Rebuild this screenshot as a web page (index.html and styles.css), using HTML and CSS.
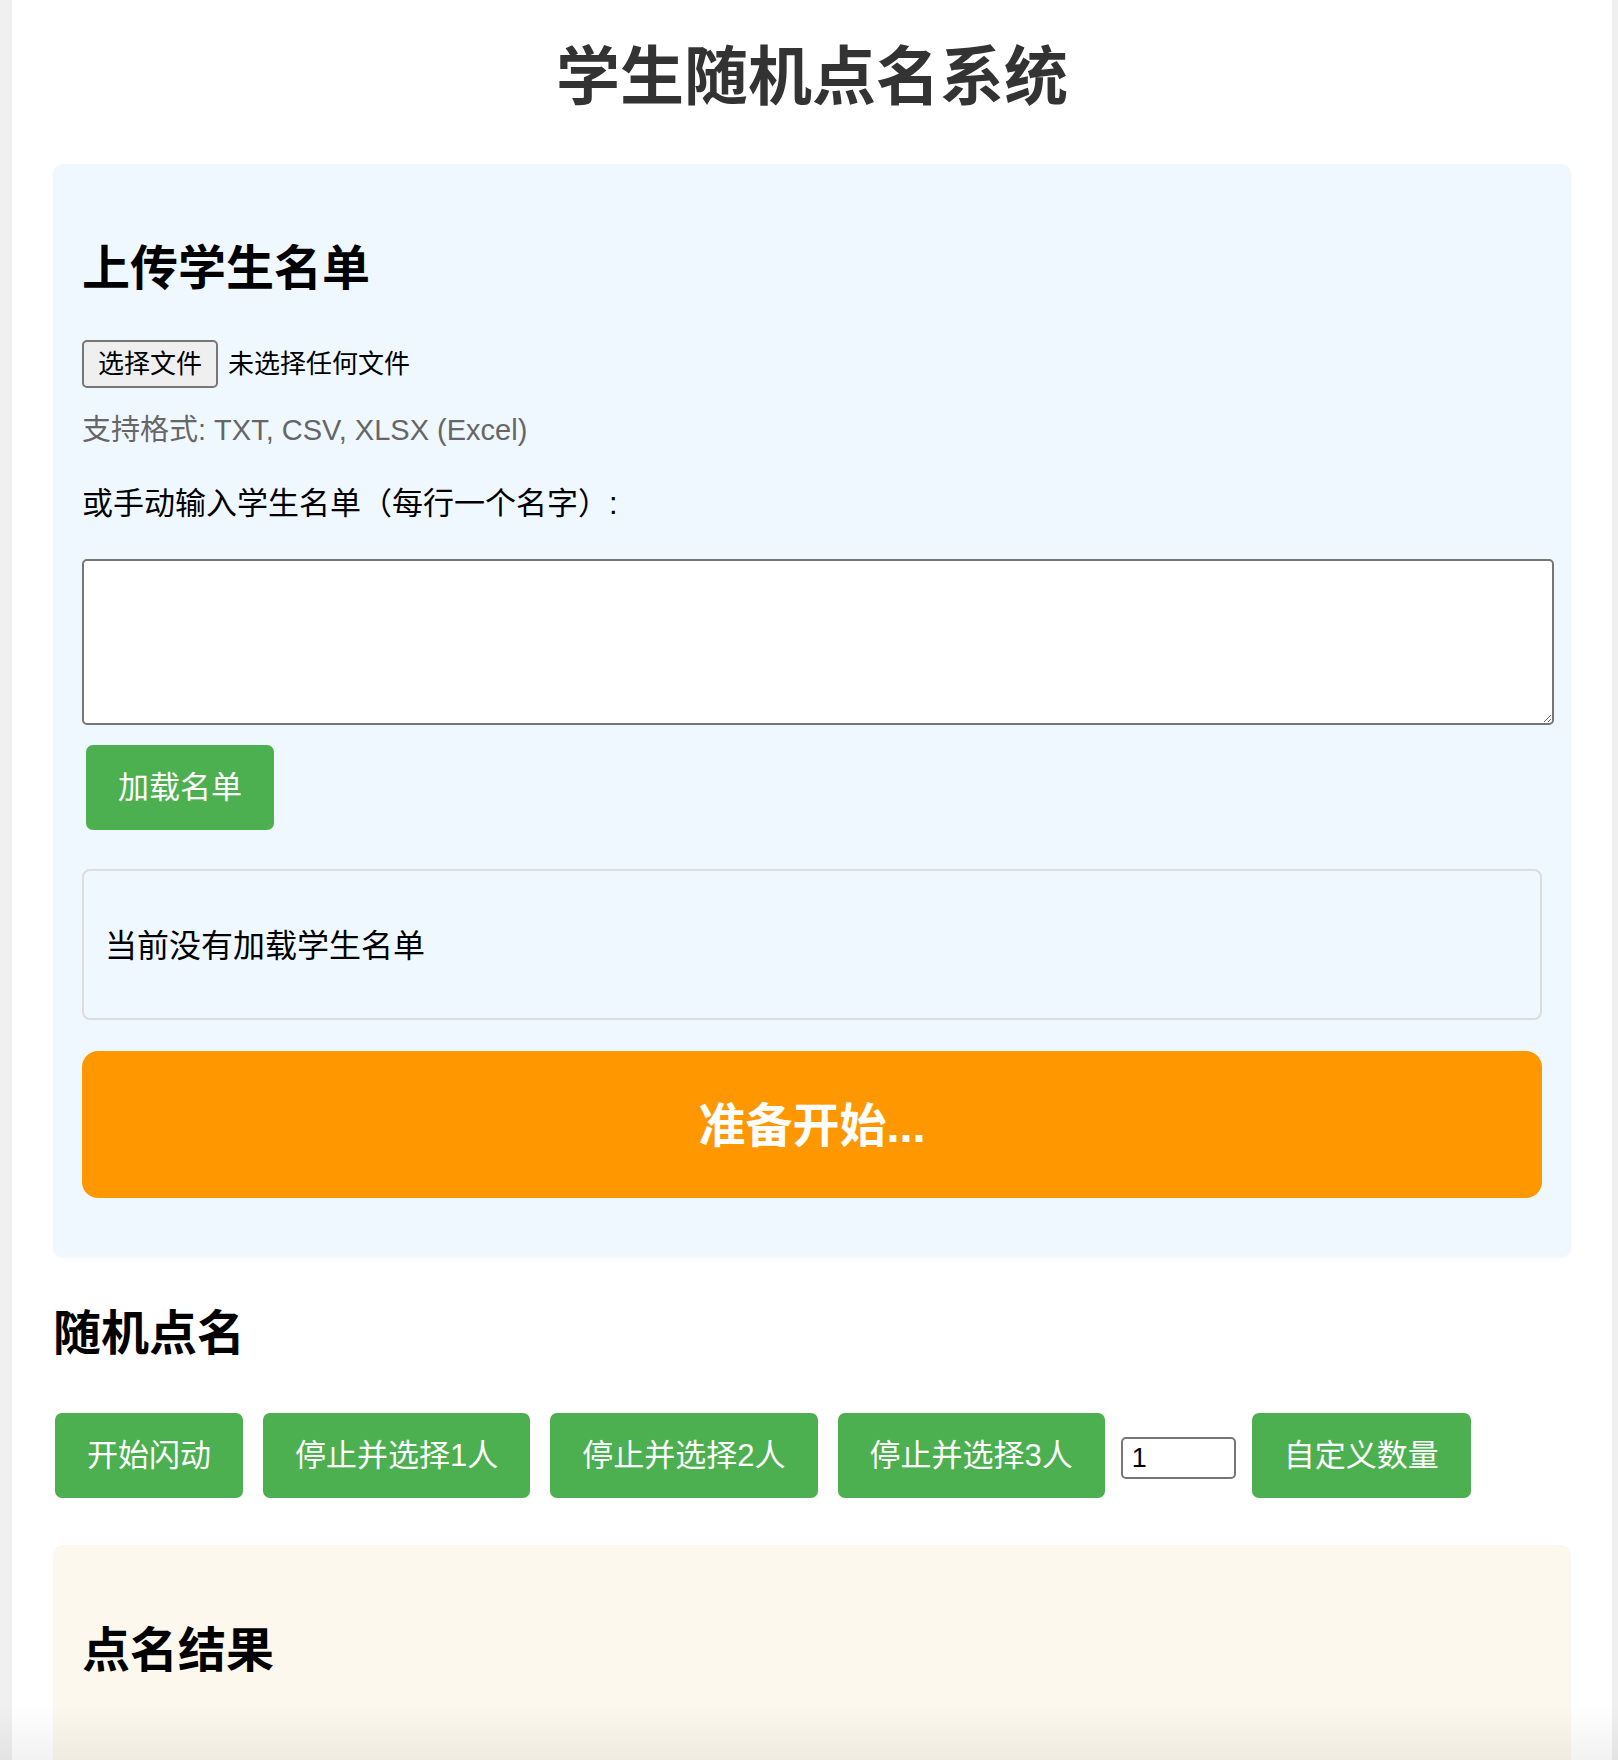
FILE: index.html
```html
<!DOCTYPE html>
<html lang="zh-CN">
<head>
<meta charset="utf-8">
<title>学生随机点名系统</title>
<link rel="stylesheet" href="styles.css">
</head>
<body>
<div class="container">
  <h1 class="title">学生随机点名系统</h1>

  <section class="upload-section">
    <h2 class="section-title">上传学生名单</h2>
    <div class="file-row">
      <button class="file-btn" type="button">选择文件</button>
      <span class="file-name">未选择任何文件</span>
    </div>
    <p class="hint">支持格式: TXT, CSV, XLSX (Excel)</p>
    <p class="label">或手动输入学生名单（每行一个名字）:</p>
    <textarea class="names-input"></textarea>
    <button class="btn load-btn" type="button">加载名单</button>
    <div class="status-box">
      <p class="status-text">当前没有加载学生名单</p>
    </div>
    <div class="display-box">准备开始...</div>
  </section>

  <h2 class="section-title plain">随机点名</h2>
  <div class="controls">
    <button class="btn first" type="button">开始闪动</button>
    <button class="btn" type="button">停止并选择1人</button>
    <button class="btn" type="button">停止并选择2人</button>
    <button class="btn" type="button">停止并选择3人</button>
    <input class="count-input" type="number" value="1">
    <button class="btn" type="button">自定义数量</button>
  </div>

  <section class="result-section">
    <h2 class="section-title">点名结果</h2>
    <div class="result-list"></div>
  </section>
</div>
<div class="bottom-fade"></div>
</body>
</html>
```

FILE: styles.css
```css
* {
  box-sizing: border-box;
}

html, body {
  margin: 0;
  padding: 0;
}

body {
  background: #f0f0f0;
  font-family: "Liberation Sans", "Noto Sans CJK SC", sans-serif;
  color: #000;
}

.container {
  margin-left: 12px;
  width: 1600px;
  min-height: 1760px;
  background: #fff;
  padding: 1px 41px 0;
}

.title {
  margin: 33px 0 43px;
  font-size: 64px;
  line-height: 87px;
  font-weight: bold;
  text-align: center;
  color: #333;
}

.upload-section {
  background: #f0f8ff;
  border-radius: 10px;
  padding: 1px 29px 29px;
  box-shadow: 0 1px 3px rgba(0, 0, 0, 0.04);
}

.section-title {
  margin: 74px 0 0;
  font-size: 48px;
  line-height: 60px;
  font-weight: bold;
  color: #000;
}

.section-title.plain {
  margin-top: 47px;
}

.file-row {
  margin-top: 41px;
  display: flex;
  align-items: center;
  gap: 10px;
}

.file-btn {
  height: 48px;
  padding: 0 14px;
  font-family: inherit;
  font-size: 26px;
  line-height: 44px;
  color: #000;
  background: #efefef;
  border: 2px solid #767676;
  border-radius: 5px;
}

.file-name {
  font-size: 26px;
  line-height: 48px;
  color: #000;
}

.hint {
  margin: 22px 0 0;
  font-size: 29px;
  line-height: 40px;
  color: #666;
}

.label {
  margin: 32px 0 0;
  font-size: 31px;
  line-height: 44px;
  color: #000;
}

.names-input {
  display: block;
  margin-top: 33px;
  width: calc(100% + 12px);
  height: 166px;
  border: 2px solid #767676;
  border-radius: 5px;
  background: #fff;
  font-family: inherit;
  font-size: 26px;
  padding: 4px;
}

.btn {
  font-family: inherit;
  font-size: 31px;
  line-height: 44px;
  padding: 20.5px 32px;
  background: #4caf50;
  color: #fff;
  border: none;
  border-radius: 7px;
  white-space: nowrap;
}

.load-btn {
  display: block;
  margin: 20px 0 0 4px;
}

.status-box {
  margin-top: 39px;
  border: 2px solid #dcdcdc;
  border-radius: 8px;
  padding: 22px 21px 19px;
}

.status-text {
  margin: 31px 0;
  font-size: 32px;
  line-height: 44px;
  color: #000;
}

.display-box {
  margin: 31px 0 30px;
  background: #ff9800;
  border-radius: 16px;
  padding: 45px 0 42px;
  font-size: 47px;
  line-height: 60px;
  font-weight: bold;
  color: #fff;
  text-align: center;
}

.controls {
  margin-top: 49px;
  display: flex;
  align-items: flex-start;
  gap: 20px;
}

.controls .first {
  margin-left: 2px;
}

.count-input {
  margin: 24px -4px 0;
  width: 115px;
  height: 42px;
  border: 2px solid #767676;
  border-radius: 5px;
  padding: 0 9px;
  font-family: "Liberation Sans", sans-serif;
  font-size: 27px;
  color: #000;
  background: #fff;
}

.result-section {
  margin-top: 47px;
  background: #fdf8ee;
  border-radius: 10px;
  padding: 1px 29px 29px;
  min-height: 400px;
}

.result-section .section-title {
  margin-top: 75px;
}

.result-list {
  min-height: 200px;
}

.bottom-fade {
  position: fixed;
  left: 0;
  right: 0;
  bottom: 0;
  height: 56px;
  pointer-events: none;
  background: linear-gradient(to bottom, rgba(0, 0, 0, 0), rgba(0, 0, 0, 0.05));
}
```
